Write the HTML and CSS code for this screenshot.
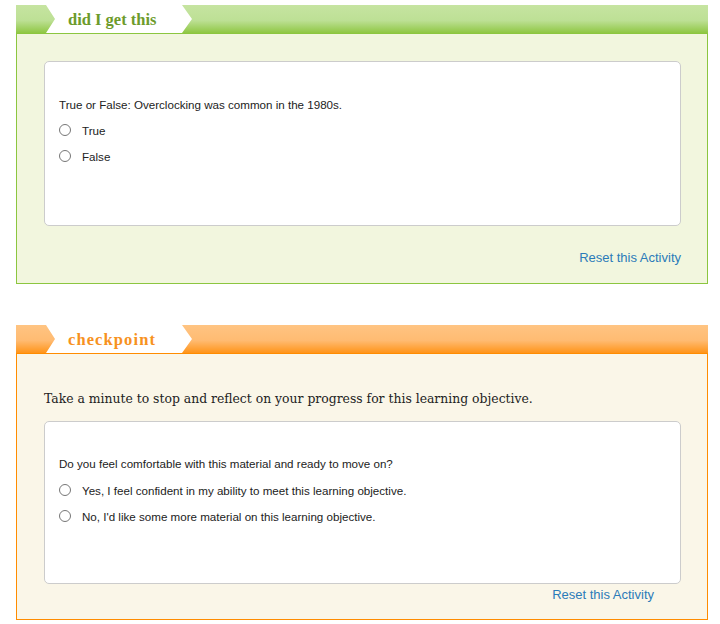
FILE: index.html
```html
<!DOCTYPE html>
<html>
<head>
<meta charset="utf-8">
<link rel="stylesheet" href="styles.css">
</head>
<body>
<section class="activity green">
  <div class="bar">
    <div class="tab"><span class="tab-title">did I get this</span></div>
  </div>
  <div class="body">
    <div class="card">
      <p class="question">True or False: Overclocking was common in the 1980s.</p>
      <label class="option"><input type="radio" name="q1"><span>True</span></label>
      <label class="option"><input type="radio" name="q1"><span>False</span></label>
    </div>
    <div class="reset"><a href="#">Reset this Activity</a></div>
  </div>
</section>

<section class="activity orange">
  <div class="bar">
    <div class="tab"><span class="tab-title">checkpoint</span></div>
  </div>
  <div class="body">
    <p class="intro">Take a minute to stop and reflect on your progress for this learning objective.</p>
    <div class="card">
      <p class="question">Do you feel comfortable with this material and ready to move on?</p>
      <label class="option"><input type="radio" name="q2"><span>Yes, I feel confident in my ability to meet this learning objective.</span></label>
      <label class="option"><input type="radio" name="q2"><span>No, I'd like some more material on this learning objective.</span></label>
    </div>
    <div class="reset reset-inset"><a href="#">Reset this Activity</a></div>
  </div>
</section>
</body>
</html>
```
FILE: styles.css
```css
html, body {
  margin: 0;
  padding: 0;
  background: #ffffff;
}
body {
  padding: 5px 12px 0 16px;
  font-family: "Liberation Sans", Arial, sans-serif;
}
.activity {
  width: 692px;
}
.activity + .activity {
  margin-top: 41px;
}
.bar {
  height: 28px;
  display: flex;
  align-items: stretch;
}
.green .bar {
  background: linear-gradient(#c6e4a1 0%, #bde095 55%, #8fc743 100%);
}
.orange .bar {
  background: linear-gradient(#ffc482 0%, #ffbb72 55%, #ff9419 100%);
}
.tab {
  margin-left: 30px;
  width: 146px;
  background: #ffffff;
  clip-path: polygon(0 0, 136px 0, 146px 50%, 136px 100%, 0 100%, 9px 50%);
  display: flex;
  align-items: center;
  padding-left: 22px;
  box-sizing: border-box;
}
.tab-title {
  font-family: "Liberation Serif", "Times New Roman", serif;
  font-weight: bold;
  font-size: 16.5px;
  padding-top: 1px;
}
.green .tab-title { color: #6d9b2b; }
.orange .tab-title {
  color: #f7921e;
  letter-spacing: 1.1px;
}

.body {
  border: 1px solid;
  padding: 27px 26px 0 27px;
}
.green .body {
  background: #f2f6de;
  border-color: #8cc63f;
  height: 222px;
}
.orange .body {
  background: #faf6e8;
  border-color: #ff8c00;
  padding-top: 36px;
  height: 229px;
}
.card {
  background: #ffffff;
  border: 1px solid #cccccc;
  border-radius: 5px;
  height: 165px;
  box-sizing: border-box;
  padding: 36px 14px 0 14px;
}
.orange .card {
  height: 163px;
  padding-top: 35px;
}
.question {
  margin: 0 0 5px 0;
  font-size: 11.6px;
  line-height: 14px;
  color: #222222;
}
.orange .question {
  margin-bottom: 6px;
}
.option {
  display: flex;
  align-items: center;
  height: 26px;
  font-size: 11.6px;
  color: #222222;
}
.option input {
  margin: 0 11px 0 0;
  width: 12px;
  height: 12px;
}
.intro {
  margin: 0 0 13px 0;
  font-family: "DejaVu Serif", Georgia, serif;
  font-size: 12.4px;
  line-height: 18px;
  color: #222222;
}
.reset {
  text-align: right;
  padding-top: 24px;
  font-size: 13px;
}
.reset-inset {
  padding-top: 3px;
  padding-right: 27px;
}
.reset a {
  color: #2b7bb9;
  text-decoration: none;
}
```
